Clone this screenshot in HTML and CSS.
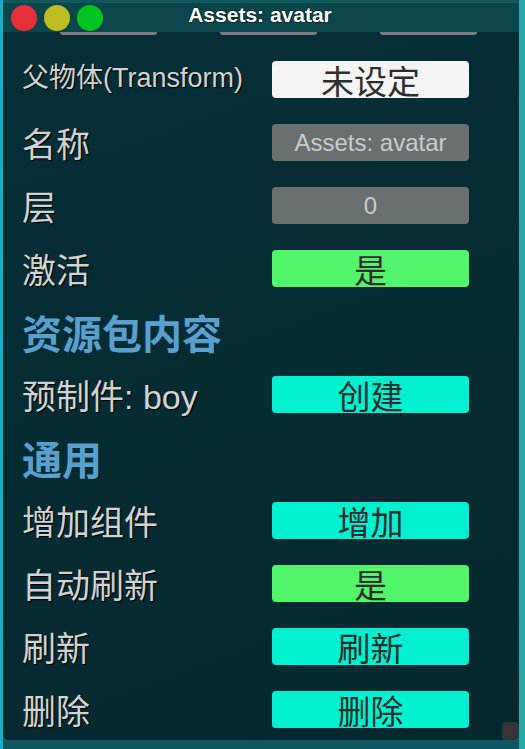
FILE: index.html
```html
<!DOCTYPE html>
<html lang="zh-CN">
<head>
    <meta charset="UTF-8">
    <meta name="viewport" content="width=device-width, initial-scale=1.0">
    <title>Assets: avatar</title>
    <link rel="stylesheet" href="styles.css">
</head>
<body>
    <div class="window">
        <!-- Title bar -->
        <div class="titlebar">
            <div class="lights">
                <span class="light red"></span>
                <span class="light yellow"></span>
                <span class="light green"></span>
            </div>
            <div class="title">Assets: avatar</div>
        </div>

        <!-- Tabs scrolled out of view -->
        <div class="tabs">
            <span class="tab"></span>
            <span class="tab"></span>
            <span class="tab"></span>
        </div>

        <div class="content">
            <div class="row">
                <span class="label small">父物体(Transform)</span>
                <span class="btn white">未设定</span>
            </div>
            <div class="row">
                <span class="label">名称</span>
                <span class="btn gray">Assets: avatar</span>
            </div>
            <div class="row">
                <span class="label">层</span>
                <span class="btn gray">0</span>
            </div>
            <div class="row">
                <span class="label">激活</span>
                <span class="btn green">是</span>
            </div>

            <div class="section">资源包内容</div>
            <div class="row">
                <span class="label">预制件: boy</span>
                <span class="btn cyan">创建</span>
            </div>

            <div class="section">通用</div>
            <div class="row">
                <span class="label">增加组件</span>
                <span class="btn cyan">增加</span>
            </div>
            <div class="row">
                <span class="label">自动刷新</span>
                <span class="btn green">是</span>
            </div>
            <div class="row">
                <span class="label">刷新</span>
                <span class="btn cyan">刷新</span>
            </div>
            <div class="row">
                <span class="label">删除</span>
                <span class="btn cyan">删除</span>
            </div>
        </div>

        <span class="grip"></span>
    </div>
</body>
</html>
```

FILE: styles.css
```css
body {
    margin: 0;
    height: 749px;
    overflow: hidden;
    font-family: "Liberation Sans", "Noto Sans CJK SC", sans-serif;
    background: linear-gradient(to right, #18aec6 0 3px, #0e5862 3px 519px, #29a8aa 519px);
}

.window {
    position: relative;
    margin-left: 3px;
    width: 516px;
    height: 740px;
    background: linear-gradient(160deg, #062f37, #05282f);
    border-radius: 0 0 6px 6px;
    overflow: hidden;
}

/* Title bar */
.titlebar {
    height: 29px;
    border-top: 3px solid #10585c;
    background-color: #0b464b;
    display: flex;
    align-items: center;
    position: relative;
    z-index: 1;
}
.lights { display: flex; gap: 7px; padding-left: 8px; }
.light { width: 26px; height: 26px; border-radius: 50%; }
.red { background-color: #e5303a; }
.yellow { background-color: #bcbd24; }
.green { background-color: #00c41f; }
.title {
    position: absolute;
    left: 0;
    right: 0;
    text-align: center;
    top: 0;
    font-size: 21px;
    font-weight: bold;
    color: #fff;
    text-shadow: 0 0 2px #000;
    padding-right: 2px;
}

.tabs { display: flex; gap: 63px; padding-left: 57px; }
.tab {
    width: 97px;
    height: 3px;
    background-color: #7a7e7e;
    border-radius: 0 0 3px 3px;
}

/* Rows */
.content { padding: 13px 0 0 19px; }
.row {
    height: 63px;
    display: flex;
    align-items: center;
}
.label {
    width: 250px;
    font-size: 34px;
    color: #d2d2d2;
    text-shadow: 1px 1px 1px #000;
}
.label.small { font-size: 27px; padding-bottom: 8px; }

.btn {
    width: 197px;
    height: 37px;
    border-radius: 4px;
    display: flex;
    align-items: center;
    justify-content: center;
    font-size: 33px;
    color: #2e2e2e;
}
.btn.white { background-color: #f4f4f4; }
.btn.gray { background-color: #6a7070; color: #c8cccc; font-size: 24px; }
.btn.green { background-color: #52f46a; }
.btn.cyan { background-color: #00f0d0; }

.section {
    height: 63px;
    display: flex;
    align-items: center;
    font-size: 40px;
    font-weight: bold;
    color: #5aa0cf;
}

.grip {
    position: absolute;
    right: 0;
    bottom: 0;
    width: 17px;
    height: 18px;
    border-radius: 4px;
    background-color: #353535;
}
```
